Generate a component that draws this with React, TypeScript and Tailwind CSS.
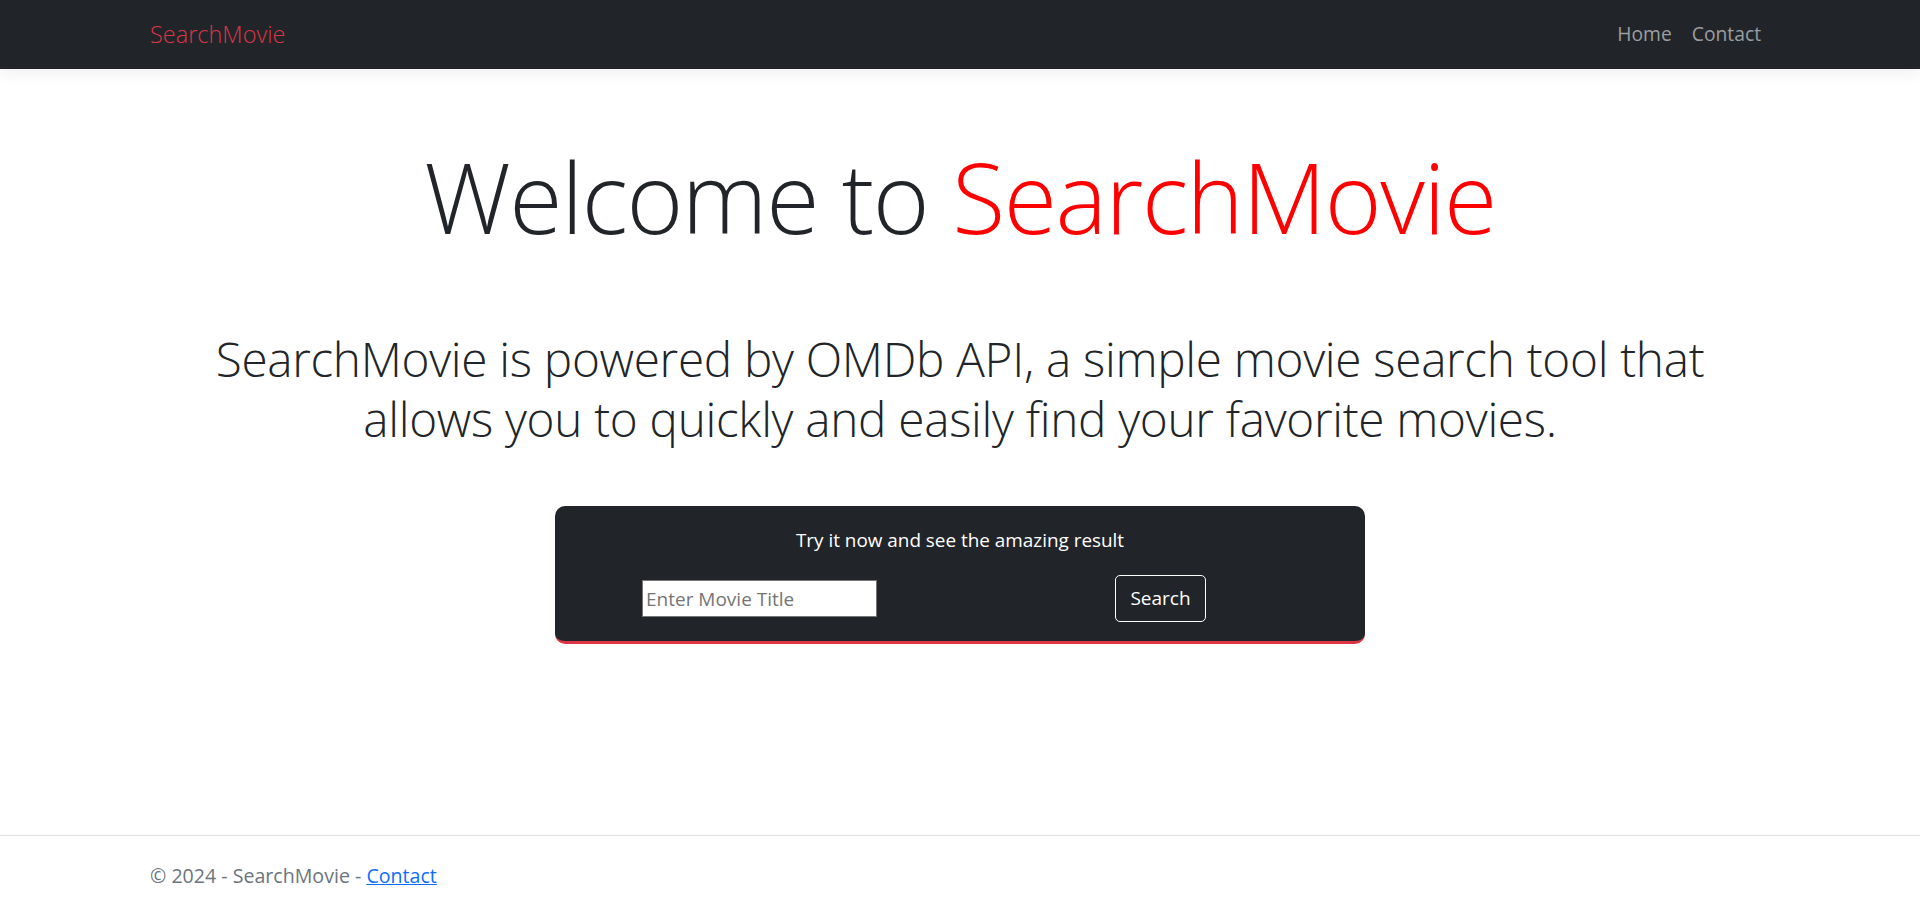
import React from "react";

export default function App() {
  const font = { fontFamily: '"Segoe UI", "Open Sans", "Noto Sans", sans-serif' };
  return (
    <div className="h-screen flex flex-col bg-white" style={font}>
      <nav className="h-[69px] shrink-0 bg-[#212529] shadow-[0_5px_15px_rgba(0,0,0,0.06)] relative z-10">
        <div className="mx-[150px] h-full flex items-center justify-between">
          <span className="text-[23.5px] font-light text-[#dc3545] leading-none">SearchMovie</span>
          <div className="flex items-center text-[19.3px] text-[#9b9d9f] font-normal">
            <span className="px-[10px]">Home</span>
            <span className="pl-[10px] pr-[9px]">Contact</span>
          </div>
        </div>
      </nav>
      <main className="flex-1 flex flex-col items-center pt-[67px]">
        <h1 className="text-[97px] leading-[120px] font-light text-[#212529] tracking-[-1.4px]">
          Welcome to <span className="text-[#ff0000]">SearchMovie</span>
        </h1>
        <p className="mt-[73px] text-[47.7px] leading-[60px] font-light text-[#212529] text-center w-[1700px] tracking-[-0.3px]">
          SearchMovie is powered by OMDb API, a simple movie search tool that
          <br />
          allows you to quickly and easily find your favorite movies.
        </p>
        <div className="mt-[57px] w-[810px] h-[138px] bg-[#212529] rounded-[10px] border-b-[3px] border-[#dc3545] pt-[19px]">
          <div className="text-center text-white text-[18.9px] leading-[30px]">
            Try it now and see the amazing result
          </div>
          <div className="mt-[20px] grid grid-cols-2 items-center">
            <div className="flex justify-center pl-[4px]">
              <input
                placeholder="Enter Movie Title"
                className="w-[235px] h-[37px] bg-white border border-[#767676] px-[3px] text-[19px] text-[#212529] placeholder:text-[#757575] outline-none"
              />
            </div>
            <div className="flex justify-center pr-[4px]">
              <button className="h-[47px] w-[91px] border border-white rounded-[5px] text-white text-[19px]">
                Search
              </button>
            </div>
          </div>
        </div>
      </main>
      <footer className="h-[72px] shrink-0 border-t border-[#dee2e6]">
        <div className="mx-[150px] pt-[25px] text-[19.6px] leading-[30px] text-[#6c757d]">
          © 2024 - SearchMovie - <a className="text-[#0d6efd] underline">Contact</a>
        </div>
      </footer>
    </div>
  );
}
